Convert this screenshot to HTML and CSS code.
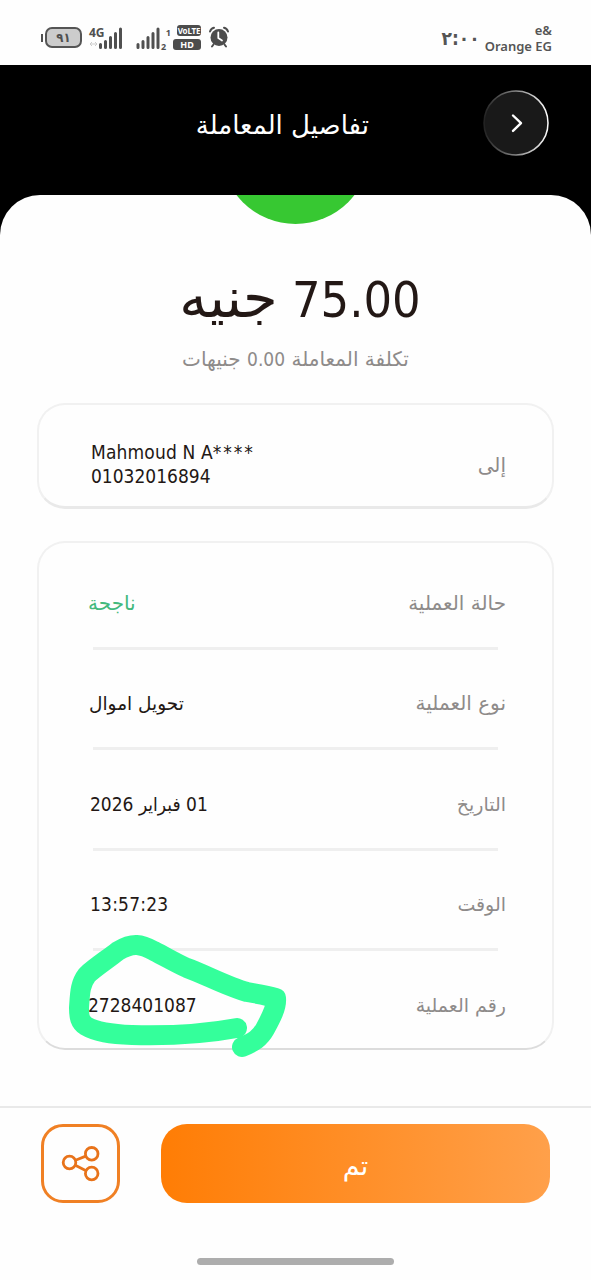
FILE: index.html
```
<!DOCTYPE html>
<html lang="ar" dir="rtl">
<head>
  <meta charset="UTF-8">
  <meta name="viewport" content="width=device-width, initial-scale=1.0">
  <title>تفاصيل المعاملة</title>
  <link rel="stylesheet" href="styles.css">
</head>
<body>
  <div class="screen">
    <div class="status-bar" dir="ltr">
      <div class="status-icons">
        <div class="battery"><span>٩١</span></div>
        <div class="network">
          <span class="net">4G</span>
          <svg class="signal" width="36" height="24" viewBox="0 0 36 24">
            <path d="M2 18h7M4 16l-2 2 2 2M7 16l2 2-2 2" stroke="#ccc" fill="none"/>
            <path d="M12.500 21.500v-3M17.500 21.500v-6M22.500 21.500v-10M27.500 21.500V7.500M32.500 21.500V3" stroke="#505050" stroke-width="3" stroke-linecap="round"/>
          </svg>
        </div>
        <svg class="signal second" width="25" height="24" viewBox="0 0 25 24">
          <path d="M3 21.500v-3M8 21.500v-6M13 21.500v-10M18 21.500V7.500M23 21.500V3" stroke="#505050" stroke-width="3" stroke-linecap="round"/>
        </svg>
        <div class="sims"><span>1</span><span>2</span></div>
        <div class="tags">
          <span class="tag volte">VoLTE</span>
          <span class="tag hd">HD</span>
        </div>
        <svg class="alarm" width="22" height="22" viewBox="0 0 22 22">
          <circle cx="11" cy="11.500" r="8.500" fill="#4c4c4c"/>
          <path d="M2 5.500Q3 2.500 6 1.800M16 1.800q3 .7 4 3.700M5.500 18.500l-1.500 2M16.500 18.500l1.500 2" stroke="#4c4c4c" stroke-width="2" stroke-linecap="round" fill="none"/>
          <path d="M10.300 6.500V12l3.700 2.500" stroke="#fff" stroke-width="1.800" stroke-linecap="round" fill="none"/>
        </svg>
      </div>
      <div class="status-text">
        <span class="clock">٢:٠٠</span>
        <span class="carrier">e&amp;<br>Orange EG</span>
      </div>
    </div>

    <div class="header">
      <button class="back">
        <svg width="66" height="66" viewBox="0 0 66 66">
          <defs>
            <linearGradient id="ring" x1="0" x2="1" y1="0" y2="0">
              <stop offset="0" stop-color="#222"/>
              <stop offset="0.500" stop-color="#888"/>
              <stop offset="1" stop-color="#fff"/>
            </linearGradient>
          </defs>
          <circle cx="33" cy="33" r="32" fill="#191919" stroke="url(#ring)" stroke-width="1.500"/>
          <path d="M30 25.500l8 7.700-8 7.700" fill="none" stroke="#fff" stroke-width="2.400" stroke-linecap="round" stroke-linejoin="round"/>
        </svg>
      </button>
      <h1 class="title">تفاصيل المعاملة</h1>
    </div>

    <div class="sheet">
      <svg class="badge" width="149" height="29" viewBox="0 0 149 29">
        <circle cx="74.500" cy="-45.500" r="74.500" fill="#37c832"/>
      </svg>
      <div class="amount">75.00 <span class="currency">جنيه</span></div>
      <div class="fee">تكلفة المعاملة <span class="num">0.00</span> جنيهات</div>

      <div class="card to-card">
        <span class="label">إلى</span>
        <span class="value" dir="ltr"><span class="name">Mahmoud N A<span class="mask">****</span></span><br>01032016894</span>
      </div>

      <div class="card details">
        <div class="row"><span class="label">حالة العملية</span><span class="value success">ناجحة</span></div>
        <div class="row"><span class="label">نوع العملية</span><span class="value type">تحويل اموال</span></div>
        <div class="row"><span class="label small">التاريخ</span><span class="value">01 فبراير 2026</span></div>
        <div class="row"><span class="label small">الوقت</span><span class="value time">13:57:23</span></div>
        <div class="row"><span class="label small">رقم العملية</span><span class="value number">2728401087</span></div>
        <svg class="marker" width="230" height="130" viewBox="65 930 230 130">
          <path d="M237 1028C205 1034 170 1036 132 1035C110 1034 96 1032 86 1026C80 1022 79 1017 79 1008C80 993 80 984 87 975C94 968 108 959 118 951C133 942 141 944 154 951C166 957 174 962 187 968C204 974 228 987 247 992C258 994 266 995 276 998C277 1007 271 1018 265 1029C260 1038 254 1042 242 1047" fill="none" stroke="#34ff9b" stroke-width="20" stroke-linecap="round" stroke-linejoin="round"/>
        </svg>
      </div>
    </div>

    <div class="footer">
      <button class="done">تم</button>
      <button class="share">
        <svg width="40" height="38" viewBox="0 0 40 38" fill="none" stroke="#e8731a" stroke-width="2.800">
          <circle cx="8.500" cy="17.500" r="6.300"/>
          <circle cx="30.700" cy="8.800" r="6.300"/>
          <circle cx="30.700" cy="28.500" r="6.300"/>
          <path d="M14.500 15.200l10.300-4.100M14.300 20.300l10.800 5.400"/>
        </svg>
      </button>
    </div>
    <div class="home-bar"></div>
  </div>
</body>
</html>
```
FILE: styles.css
```
* {
  margin: 0;
  padding: 0;
  box-sizing: border-box;
}
body {
  width: 591px;
  height: 1280px;
  overflow: hidden;
  background: #fefefe;
  color: #231815;
  font-family: "DejaVu Sans Condensed", "DejaVu Sans", sans-serif;
}
button {
  border: none;
  background: none;
  font-family: inherit;
}
svg {
  display: block;
}
.screen {
  display: flex;
  flex-direction: column;
  height: 1280px;
}

/* status bar */
.status-bar {
  display: flex;
  justify-content: space-between;
  height: 65px;
  padding: 0 39px 0 41px;
  color: #505050;
}
.status-icons {
  display: flex;
  align-items: flex-start;
  padding-top: 26px;
}
.battery {
  display: flex;
  align-items: center;
  margin-top: 1px;
}
.battery::before {
  content: "";
  width: 2px;
  height: 8px;
  background: #505050;
}
.battery span {
  width: 37px;
  height: 21px;
  margin-left: 2px;
  border: 2px solid #555;
  border-radius: 7px;
  background: #ccc;
  font-size: 13px;
  font-weight: bold;
  line-height: 17px;
  text-align: center;
}
.network {
  display: flex;
  margin-left: 7px;
}
.net {
  width: 16px;
  height: 14px;
  margin-right: -17px;
  font: bold 12px/14px "Noto Sans", sans-serif;
  white-space: nowrap;
}
.signal.second {
  margin-left: 11px;
}
.sims {
  display: flex;
  flex-direction: column;
  width: 10px;
  margin-left: 1px;
  font: bold 9px/14px "Noto Sans", sans-serif;
}
.sims span:first-child {
  text-align: right;
}
.tags {
  display: flex;
  flex-direction: column;
  gap: 3px;
  width: 28px;
  margin-left: 2px;
  margin-top: -1px;
}
.tag {
  height: 11px;
  border-radius: 3px;
  background: #4c4c4c;
  color: #fff;
  font: bold 9px/11px "Noto Sans", sans-serif;
  text-align: center;
}
.volte {
  width: 24px;
  margin-left: 4px;
  font-size: 8px;
  letter-spacing: -0.2px;
}
.alarm {
  margin-left: 7px;
}
.status-text {
  display: flex;
  color: #555;
}
.clock {
  margin-right: 5px;
  padding-top: 26px;
  font-size: 19px;
  font-weight: bold;
  line-height: 24px;
  letter-spacing: -3px;
}
.carrier {
  padding-top: 22px;
  font: 600 13px/16px "Noto Sans", sans-serif;
  text-align: right;
}

/* header */
.header {
  display: flex;
  align-items: flex-start;
  height: 170px;
  padding: 25px 42px 0 0;
  background: #000;
}
.title {
  margin-right: 114px;
  color: #fff;
  font: normal 26px/70px "DejaVu Sans", sans-serif;
}

/* sheet */
.sheet {
  display: flex;
  flex-direction: column;
  height: 911px;
  margin-top: -40px;
  padding: 0 37px;
  border-radius: 40px 40px 0 0;
  background: #fefefe;
}
.badge {
  align-self: center;
}
.amount {
  height: 76px;
  margin-top: 38px;
  padding-left: 9px;
  font-size: 50px;
  line-height: 76px;
  text-align: center;
}
.currency {
  font-family: "DejaVu Sans", sans-serif;
  font-size: 56px;
  line-height: 1;
}
.fee {
  height: 30px;
  margin-top: 6px;
  color: #8e8b8a;
  font: 20px/30px "DejaVu Sans", sans-serif;
  text-align: center;
}
.num {
  font-family: "DejaVu Sans Condensed", sans-serif;
  font-size: 19px;
}
.card {
  border: 2px solid #f1f1f1;
  border-bottom: 3px solid #e9e9e9;
  border-radius: 28px;
}
.label {
  color: #8e8b8a;
  font-family: "DejaVu Sans", sans-serif;
  font-size: 20px;
}
.label.small {
  font-size: 19px;
}
.value {
  font-size: 19px;
}
.to-card {
  display: flex;
  justify-content: space-between;
  align-items: center;
  height: 106px;
  margin-top: 29px;
  padding: 16px 46px 0 52px;
}
.to-card .label {
  padding-top: 2px;
}
.to-card .value {
  line-height: 24px;
}
.name {
  letter-spacing: 0.15px;
}
.mask {
  letter-spacing: 1.9px;
}
.details {
  position: relative;
  height: 509px;
  margin-top: 32px;
  padding: 6px 54px 0 54px;
  border-bottom: 2px solid #dcdcdc;
}
.row {
  display: flex;
  justify-content: space-between;
  align-items: center;
  height: 100.500px;
  padding-top: 10px;
  border-bottom: 3px solid #efefef;
}
.row:nth-child(5) {
  height: 98px;
  border-bottom: none;
}
.row .label {
  margin-right: -8px;
}
.row .value {
  margin-left: -3px;
}
.row .success {
  margin-left: -5px;
  color: #43b97c;
  font-family: "DejaVu Sans", sans-serif;
  font-size: 20px;
}
.row .type {
  margin-left: -4px;
  font-family: "DejaVu Sans", sans-serif;
  font-size: 18.5px;
}
.row .time {
  letter-spacing: 0.2px;
}
.row .number {
  margin-left: -5px;
}
/* highlighter stroke around the transaction number */
.marker {
  position: absolute;
  left: 26px;
  top: 387px;
}

/* footer */
.footer {
  display: flex;
  justify-content: space-between;
  height: 152px;
  padding: 16px 41px 0;
  border-top: 2px solid #e9e9e9;
}
.done {
  width: 389px;
  height: 79px;
  padding-top: 3px;
  border-radius: 26px;
  background: linear-gradient(90deg, #ff7d05, #ffa04a);
  color: #fff;
  font-family: "DejaVu Sans", sans-serif;
  font-size: 27px;
}
.share {
  display: flex;
  align-items: center;
  justify-content: center;
  width: 79px;
  height: 79px;
  border: 3px solid #f08024;
  border-radius: 22px;
}
.home-bar {
  width: 197px;
  height: 7px;
  margin: 0 auto;
  border-radius: 4px;
  background: #adadad;
}
```
